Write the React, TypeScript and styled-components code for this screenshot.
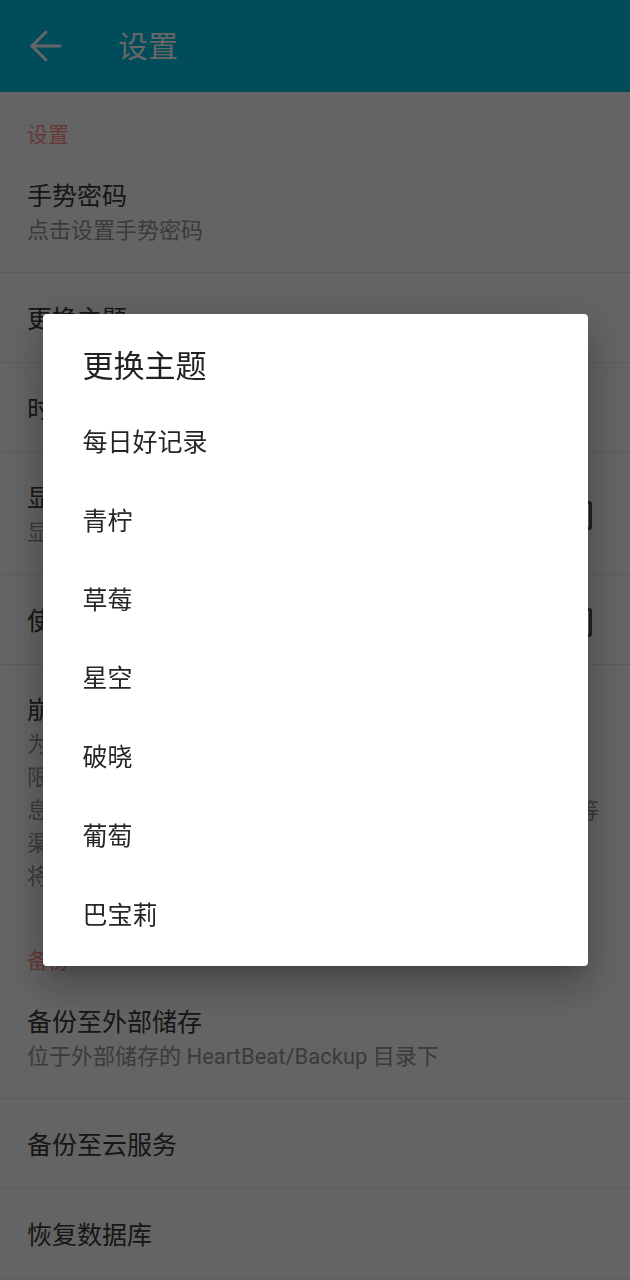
import * as React from "react";
import styled, { createGlobalStyle } from "styled-components";
import { ArrowLeft } from "lucide-react";

const GlobalStyle = createGlobalStyle`
  html, body {
    margin: 0;
    padding: 0;
    background: #fafafa;
  }
  body {
    font-family: Roboto, "Noto Sans CJK SC", sans-serif;
    overflow: hidden;
  }
`;

const Page = styled.div`
  width: 630px;
  min-height: 1280px;
  background: #fafafa;
`;

const Toolbar = styled.header`
  height: 92px;
  background: #00bfe0;
  display: flex;
  align-items: center;
  padding-left: 22px;
  gap: 48px;
  color: #ffffff;
`;

const ToolbarTitle = styled.h1`
  margin: 0;
  font-size: 30px;
  font-weight: 400;
  line-height: 36px;
  padding-top: 2px;
`;

const Category = styled.div`
  padding: 28px 27px 1px;
  font-size: 21px;
  line-height: 30px;
  color: #ff8f8a;
`;

const Pref = styled.div<{ $single?: boolean; $last?: boolean }>`
  display: flex;
  align-items: center;
  padding: ${p => (p.$single ? "30px" : "29px")} 38px 25px 27px;
  border-bottom: ${p => (p.$last ? "none" : "1px solid #e2e2e2")};
`;

const PrefText = styled.div`
  flex: 1;
  min-width: 0;
`;

const PrefTitle = styled.div`
  font-size: 25px;
  line-height: 34px;
  color: #383838;
`;

const PrefSummary = styled.div`
  font-size: 22px;
  line-height: 33px;
  color: #939393;
  white-space: nowrap;
`;

const CheckBox = styled.span`
  flex: none;
  width: 21px;
  height: 23px;
  border: 3px solid #555555;
  border-radius: 3px;
  margin-left: 16px;
`;

const Scrim = styled.div`
  position: fixed;
  inset: 0;
  background: rgba(0, 0, 0, 0.6);
  display: flex;
  align-items: center;
  justify-content: center;
`;

const Dialog = styled.div`
  width: 545px;
  background: #ffffff;
  border-radius: 4px;
  padding: 35px 0 14px;
  box-shadow: 0 11px 15px -7px rgba(0, 0, 0, 0.2),
    0 24px 38px 3px rgba(0, 0, 0, 0.14), 0 9px 46px 8px rgba(0, 0, 0, 0.12);
`;

const DialogTitle = styled.h2`
  margin: 0 0 16px;
  padding: 0 40px;
  font-size: 31px;
  font-weight: 400;
  line-height: 36px;
  color: #222222;
`;

const Option = styled.div`
  height: 78.8px;
  display: flex;
  align-items: center;
  padding: 0 40px;
  font-size: 25px;
  color: #262626;
`;

const themes = ["每日好记录", "青柠", "草莓", "星空", "破晓", "葡萄", "巴宝莉"];

const crashLines = [
  "为了更好地改进应用，当应用发生崩溃时会自动",
  "限制收集崩溃时的设备型号、系统版本",
  "息，例如设备型号、系统版本、应用版本及崩溃堆栈信息等",
  "渠道上传至开发者，仅用于定位问题",
  "将不再上传任何信息",
];

export default function App() {
  return (
    <>
      <GlobalStyle />
      <Page>
        <Toolbar>
          <ArrowLeft size={48} strokeWidth={1.5} />
          <ToolbarTitle>设置</ToolbarTitle>
        </Toolbar>

        <Category>设置</Category>
        <Pref>
          <PrefText>
            <PrefTitle>手势密码</PrefTitle>
            <PrefSummary>点击设置手势密码</PrefSummary>
          </PrefText>
        </Pref>
        <Pref $single>
          <PrefText>
            <PrefTitle>更换主题</PrefTitle>
          </PrefText>
        </Pref>
        <Pref $single>
          <PrefText>
            <PrefTitle>时间轴样式</PrefTitle>
          </PrefText>
        </Pref>
        <Pref>
          <PrefText>
            <PrefTitle>显示心情图标</PrefTitle>
            <PrefSummary>显示日记列表中的心情图标</PrefSummary>
          </PrefText>
          <CheckBox />
        </Pref>
        <Pref $single>
          <PrefText>
            <PrefTitle>使用指纹解锁</PrefTitle>
          </PrefText>
          <CheckBox />
        </Pref>
        <Pref $last>
          <PrefText>
            <PrefTitle>崩溃报告</PrefTitle>
            {crashLines.map((line, i) => (
              <PrefSummary key={i}>{line}</PrefSummary>
            ))}
          </PrefText>
        </Pref>

        <Category>备份</Category>
        <Pref>
          <PrefText>
            <PrefTitle>备份至外部储存</PrefTitle>
            <PrefSummary>位于外部储存的 HeartBeat/Backup 目录下</PrefSummary>
          </PrefText>
        </Pref>
        <Pref $single>
          <PrefText>
            <PrefTitle>备份至云服务</PrefTitle>
          </PrefText>
        </Pref>
        <Pref $single>
          <PrefText>
            <PrefTitle>恢复数据库</PrefTitle>
          </PrefText>
        </Pref>
      </Page>

      <Scrim>
        <Dialog>
          <DialogTitle>更换主题</DialogTitle>
          {themes.map(name => (
            <Option key={name}>{name}</Option>
          ))}
        </Dialog>
      </Scrim>
    </>
  );
}
